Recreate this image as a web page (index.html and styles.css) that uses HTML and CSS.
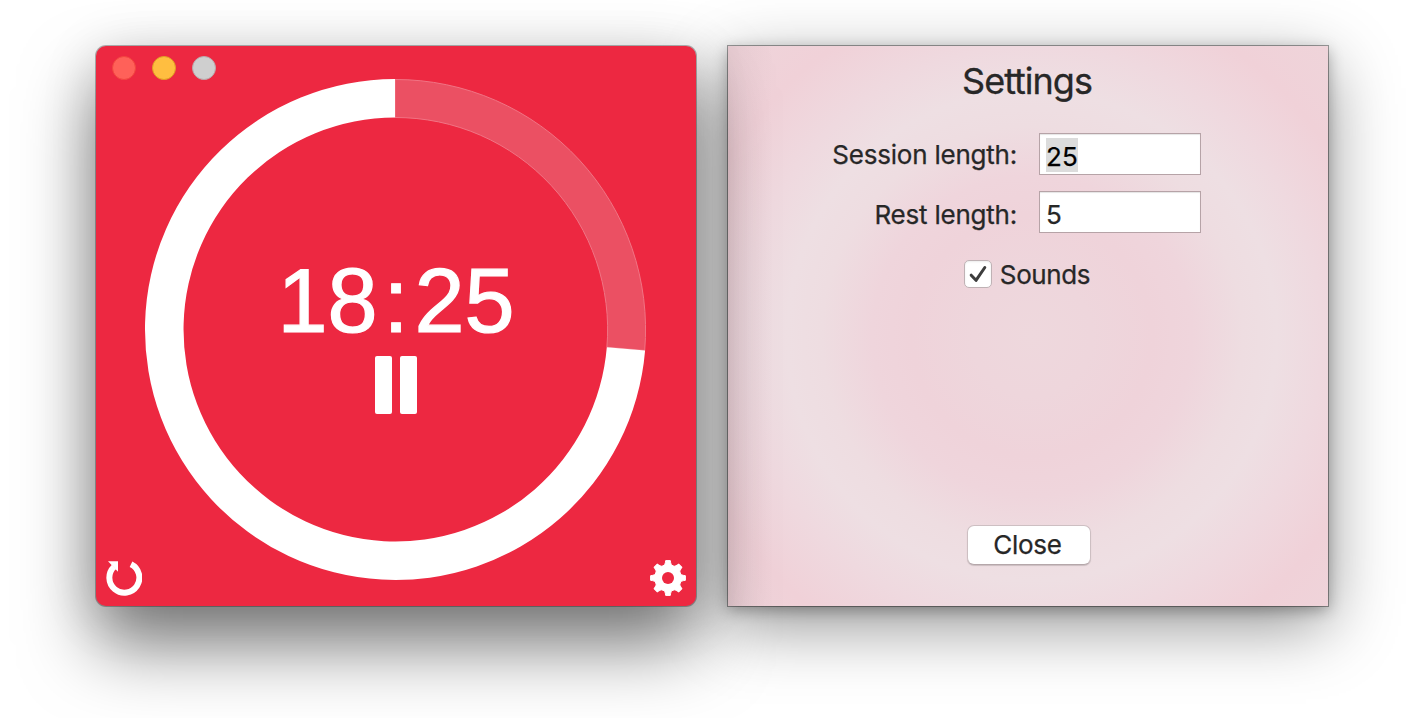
FILE: index.html
```
<!DOCTYPE html>
<html lang="en">
<head>
<meta charset="utf-8">
<title>Timer</title>
<link rel="stylesheet" href="styles.css">
</head>
<body>
<main class="desktop">
  <section class="window timer">
    <svg class="ring" viewBox="0 0 600 560" aria-hidden="true">
      <path class="ring-elapsed" d="M299 33.5A250 250 0 0 1 548.7 304.4L510.9 301.2A212 212 0 0 0 299 71.5Z"/>
      <path class="ring-left" d="M549.1 304.5A250.5 250.5 0 1 1 299 33V71.5A212 212 0 1 0 510.8 301.2Z"/>
    </svg>
    <div class="face">
      <header class="lights">
        <span class="light light-close"></span>
        <span class="light light-min"></span>
        <span class="light light-zoom"></span>
      </header>
      <div class="readout">
        <div class="time">18<span class="colon">:</span>25</div>
        <div class="pause"><span class="bar"></span><span class="bar"></span></div>
      </div>
      <footer class="tools">
        <svg class="tool" width="36" height="36" viewBox="0 0 36 36" aria-label="Restart">
          <path d="M25 4.2A15 15 0 1 1 8 6.8" fill="none" stroke="#fff" stroke-width="6"/>
          <path d="M2 1.2H12V11.8Z" fill="#fff"/>
        </svg>
        <svg class="tool" width="36" height="36" viewBox="0 0 36 36" aria-label="Settings">
          <g fill="#fff" stroke="#fff" stroke-width="1" stroke-linejoin="round">
            <path id="teeth" d="M12.3 6.2C15 5.2 15.2 4 15.7.6H20.3C20.8 4 21 5.2 23.7 6.2V29.8C21 30.8 20.8 32 20.3 35.4H15.7C15.2 32 15 30.8 12.3 29.8Z"/>
            <use href="#teeth" transform="rotate(45 18 18)"/>
            <use href="#teeth" transform="rotate(90 18 18)"/>
            <use href="#teeth" transform="rotate(135 18 18)"/>
          </g>
          <circle cx="18" cy="18" r="6" fill="#ed2841"/>
        </svg>
      </footer>
    </div>
  </section>
  <section class="window settings">
    <h1 class="title">Settings</h1>
    <div class="fields">
      <span class="label">Session length:</span>
      <div class="field"><span class="selected">25</span></div>
      <span class="label label-rest">Rest length:</span>
      <div class="field"><span class="value">5</span></div>
    </div>
    <div class="sounds">
      <span class="checkbox">
        <svg width="26" height="26" viewBox="0 0 26 26"><path d="M6.2 14.2L11 19.3L19.8 6.5" fill="none" stroke="#3d3d3d" stroke-width="3" stroke-linecap="round" stroke-linejoin="round"/></svg>
      </span>
      <span class="sounds-label">Sounds</span>
    </div>
    <button class="close">Close</button>
  </section>
</main>
</body>
</html>
```
FILE: styles.css
```
body { margin: 0; background: #fff; overflow: hidden; }
.desktop {
  box-sizing: border-box;
  width: 1426px;
  height: 718px;
  padding: 46px 0 0 96px;
  display: flex;
  align-items: flex-start;
  gap: 32px;
  overflow: hidden;
}
.window { width: 600px; height: 560px; flex: none; }
.timer {
  display: grid;
  z-index: 1;
  border-radius: 10px;
  background: #ed2841;
  box-shadow: 0 0 0 1px rgba(0,0,0,.28), 0 40px 72px rgba(0,0,0,.5), 0 8px 56px rgba(0,0,0,.14);
}
.ring, .face { grid-area: 1 / 1; width: 600px; height: 560px; }
.ring-elapsed { fill: #eb5063; stroke: #f17484; stroke-width: 1; }
.ring-left { fill: #fff; }
.face {
  box-sizing: border-box;
  z-index: 1;
  padding: 10px;
  display: flex;
  flex-direction: column;
  justify-content: space-between;
}
.lights { display: flex; gap: 16px; padding-left: 6px; }
.light { box-sizing: border-box; width: 24px; height: 24px; border-radius: 50%; }
.light-close { background: #ff6159; border: 1px solid #f2453f; }
.light-min { background: #ffbe40; border: 1px solid #dfa023; }
.light-zoom { background: #cfcfcf; border: 1px solid #b9a9ab; }
.readout { display: flex; flex-direction: column; align-items: center; padding-top: 30px; }
.time {
  font: 90px/90px "Liberation Sans", Arial, sans-serif;
  color: #fff;
  white-space: nowrap;
  -webkit-text-stroke: 1.2px #fff;
}
.colon { padding: 0 6px; }
.pause { display: flex; gap: 8px; margin-top: 10px; }
.bar { width: 17px; height: 58px; border-radius: 2px; background: #fff; }
.tools { display: flex; justify-content: space-between; }
.tool { display: block; }
.settings {
  box-sizing: border-box;
  display: flex;
  flex-direction: column;
  align-items: center;
  font-family: Inter, "Liberation Sans", sans-serif;
  font-size: 26px;
  font-variant-ligatures: none;
  color: #272727;
  background:
    linear-gradient(90deg, rgba(90,55,65,.05), transparent 45px),
    radial-gradient(circle at 304px 290px, #eed8dd 0, #eed6dc 60px, #efd3da 120px, #efd5dc 160px, #eedde1 210px, #eedfe3 245px, #efd9df 290px, #f0d1d8 350px, #efd4da 410px);
  box-shadow: 0 0 0 1px rgba(0,0,0,.36), 0 4px 14px rgba(0,0,0,.3), 0 20px 64px rgba(0,0,0,.42);
}
.title { margin: 13px 2px 0 0; font-size: 36px; line-height: 44px; font-weight: 400; letter-spacing: -1px; -webkit-text-stroke: .3px; }
.fields {
  align-self: flex-start;
  margin: 30px 0 0 104px;
  display: grid;
  grid-template-columns: 186px 162px;
  grid-template-rows: 42px 42px;
  column-gap: 21px;
  row-gap: 16px;
}
.label { line-height: 44px; text-align: right; letter-spacing: -.22px; white-space: nowrap; margin-right: 1px; }
.label-rest { line-height: 48px; }
.field {
  box-sizing: border-box;
  height: 42px;
  border: 1px solid #b6a3a7;
  background: #fff;
  padding: 4px 0 0 6px;
  box-shadow: inset 0 1px 1px #e5e5e5;
}
.selected { display: inline-block; height: 34px; line-height: 37px; background: #dcdcdc; color: #000; letter-spacing: .1px; }
.value { display: block; line-height: 37px; }
.label, .selected, .value, .sounds-label, .close { -webkit-text-stroke: .25px; }
.sounds { display: flex; align-items: center; gap: 8px; margin: 26px 2px 0 0; height: 30px; }
.checkbox {
  width: 26px;
  height: 26px;
  border-radius: 5px;
  border: 1px solid #bfb2b5;
  background: #fff;
  box-shadow: inset 0 1px 2px #ececec;
}
.checkbox svg { display: block; }
.sounds-label { letter-spacing: -.4px; }
.close {
  width: 124px;
  height: 40px;
  margin: auto 0 41px 2px;
  padding: 0 3px 1px 0;
  border: 1px solid #cdbfc2;
  border-bottom-color: #b5a7aa;
  border-radius: 7px;
  background: #fff;
  box-shadow: 0 1px 1px rgba(0,0,0,.15);
  font: inherit;
  letter-spacing: -.3px;
  color: #272727;
}
```
